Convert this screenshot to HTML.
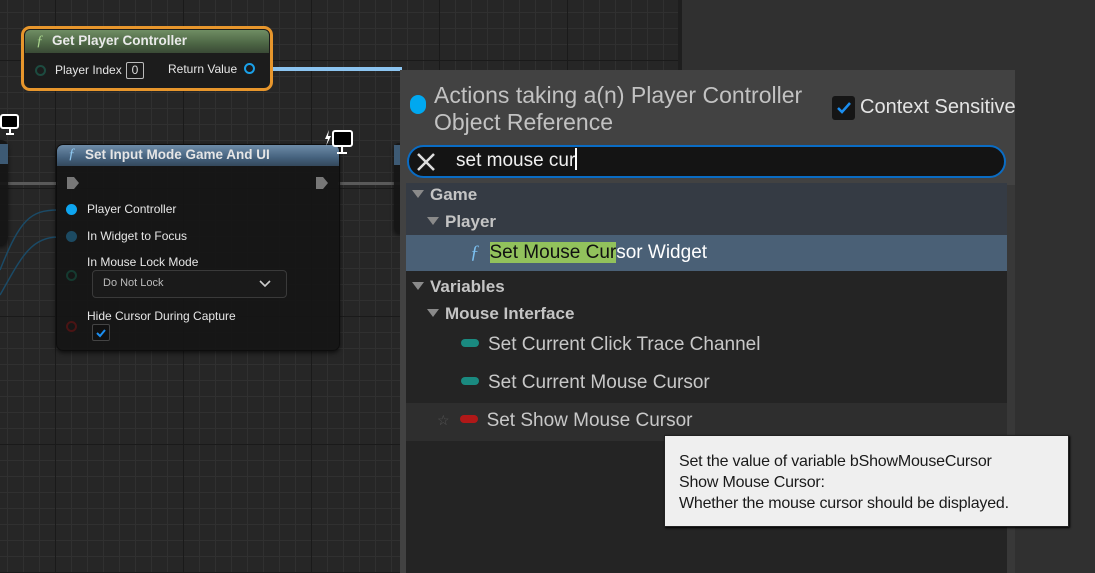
<!DOCTYPE html>
<html><head><meta charset="utf-8"><style>
*{margin:0;padding:0;box-sizing:border-box}
body{width:1095px;height:573px;overflow:hidden;background:#303030;font-family:"Liberation Sans",sans-serif;position:relative}
.abs{position:absolute}
#grid{left:0;top:0;width:678px;height:573px;background-color:#262626;
background-image:linear-gradient(#1a1a1a 1px,transparent 1px),linear-gradient(90deg,#1a1a1a 1px,transparent 1px),linear-gradient(#303030 1px,transparent 1px),linear-gradient(90deg,#303030 1px,transparent 1px);
background-size:128px 128px,128px 128px,16px 16px,16px 16px;background-position:0 60px,55px 0,0 12px,7px 0}
#gedge{left:678px;top:0;width:4px;height:573px;background:#1e1e1e}
.node{border-radius:7px;background:rgba(22,22,22,.93);box-shadow:0 2px 4px rgba(0,0,0,.6)}
.t{color:#e6e6e6;font-size:12px;position:absolute;white-space:nowrap}
.pin{position:absolute;width:11px;height:11px;border-radius:50%}
.pop{left:400px;top:70px;width:615px;height:503px;background:#424242}
.row{position:absolute;left:406px;width:601px;color:#c0c0c0;white-space:nowrap}
.tri{display:inline-block;width:0;height:0;border-left:6px solid transparent;border-right:6px solid transparent;border-top:8px solid #8a8a8a;margin-right:6px;vertical-align:2px}
.cat{font-size:17px;font-weight:bold;color:#c4c4c4}
.item{font-size:19px;color:#c8c8c8}
.pill{display:inline-block;width:18px;height:8px;border-radius:4px;vertical-align:3px;margin-right:9px}
</style></head><body>
<div id="grid" class="abs"></div><div id="gedge" class="abs"></div>

<div class="abs" style="left:262px;top:67px;width:140px;height:4px;background:#8cc4f0"></div>
<div class="abs" style="left:0;top:182px;width:58px;height:3px;background:#5a5a5a"></div>
<div class="abs" style="left:338px;top:182px;width:62px;height:3px;background:#5a5a5a"></div>
<svg class="abs" style="left:0;top:200px" width="70" height="100"><path d="M0 95 C20 60 30 37 58 37" stroke="#1b4a66" stroke-width="1.5" fill="none"/><path d="M0 70 C20 20 30 10 58 10" stroke="#1b4a66" stroke-width="1.5" fill="none"/></svg>

<div class="abs node" style="left:-10px;top:140px;width:18px;height:105px"></div>
<div class="abs" style="left:-10px;top:144px;width:18px;height:20px;background:#3d5a74"></div>
<svg class="abs" style="left:0;top:114px" width="20" height="22"><rect x="1" y="1" width="17" height="13" rx="2" fill="#000" stroke="#fff" stroke-width="2"/><path d="M6 20h8M10 14v6" stroke="#fff" stroke-width="2"/></svg>

<div class="abs node" style="left:394px;top:143px;width:10px;height:90px"></div>
<div class="abs" style="left:394px;top:145px;width:6px;height:20px;background:#3d5a74"></div>

<div class="abs" style="left:21px;top:26px;width:252px;height:65px;border:3px solid #e7962c;border-radius:9px;background:#1c1c1c"></div>
<div class="abs" style="left:25px;top:30px;width:244px;height:23px;border-radius:5px 5px 0 0;background:linear-gradient(180deg,#6f8d63,#4c6544 60%,#3a4a36)"></div>
<div class="t" style="left:36px;top:33px;color:#a9d58c;font-style:italic;font-family:'Liberation Serif',serif;font-size:15px">ƒ</div>
<div class="t" style="left:52px;top:33px;font-weight:bold;font-size:13.5px;color:#eaeaea">Get Player Controller</div>
<div class="pin" style="left:35px;top:65px;border:2px solid #1d4b40;width:11px;height:11px"></div>
<div class="t" style="left:55px;top:63px">Player Index</div>
<div class="abs" style="left:126px;top:62px;width:18px;height:17px;border:1px solid #bbb;border-radius:2px;color:#ddd;font-size:12px;text-align:center;line-height:15px">0</div>
<div class="t" style="left:168px;top:62px">Return Value</div>
<div class="pin" style="left:244px;top:63px;border:2px solid #1aa0e8"></div>

<div class="abs node" style="left:56px;top:144px;width:284px;height:207px;border:1px solid #0d0d0d"></div>
<div class="abs" style="left:57px;top:145px;width:282px;height:21px;border-radius:6px 6px 0 0;background:linear-gradient(180deg,#6e8ca8,#45627e 60%,#34485c)"></div>
<div class="t" style="left:68px;top:146px;color:#8fc8f0;font-style:italic;font-family:'Liberation Serif',serif;font-size:15px">ƒ</div>
<div class="t" style="left:85px;top:147px;font-weight:bold;font-size:13.5px;color:#e6e6e6">Set Input Mode Game And UI</div>
<svg class="abs" style="left:324px;top:129px" width="30" height="27"><path d="M5 1 L1 10 L4 10 L2 17 L7 7 L4 7Z" fill="#fff"/><rect x="9" y="2" width="19" height="15" rx="2" fill="#000" stroke="#fff" stroke-width="2"/><path d="M13 24h10M18 17v7" stroke="#fff" stroke-width="2"/></svg>
<svg class="abs" style="left:66px;top:176px" width="14" height="14"><path d="M1 1h7l5 6-5 6H1z" fill="#777"/></svg>
<svg class="abs" style="left:315px;top:176px" width="14" height="14"><path d="M1 1h7l5 6-5 6H1z" fill="#777"/></svg>
<div class="pin" style="left:66px;top:204px;background:#0ea5f0"></div>
<div class="t" style="left:87px;top:202px">Player Controller</div>
<div class="pin" style="left:66px;top:231px;background:#1c4a62"></div>
<div class="t" style="left:87px;top:229px">In Widget to Focus</div>
<div class="t" style="left:87px;top:255px">In Mouse Lock Mode</div>
<div class="pin" style="left:66px;top:270px;border:2px solid #153a30"></div>
<div class="abs" style="left:92px;top:270px;width:195px;height:28px;border:1px solid #3a3a3a;border-radius:4px;background:#1a1a1a"></div>
<div class="t" style="left:103px;top:277px;font-size:11px;color:#bbb">Do Not Lock</div>
<svg class="abs" style="left:259px;top:279px" width="12" height="10"><path d="M1 2l5 5 5-5" stroke="#ccc" stroke-width="1.6" fill="none"/></svg>
<div class="t" style="left:87px;top:309px">Hide Cursor During Capture</div>
<div class="pin" style="left:66px;top:321px;border:2px solid #4a1414"></div>
<div class="abs" style="left:92px;top:324px;width:18px;height:17px;border:1px solid #444;border-radius:2px;background:#111"></div>
<svg class="abs" style="left:94px;top:326px" width="14" height="13"><path d="M3 7l3 3 5-6" stroke="#1b8ef0" stroke-width="2" fill="none"/></svg>

<div class="abs pop"></div>
<div class="abs" style="left:1007px;top:185px;width:8px;height:388px;background:#383838"></div>
<div class="abs" style="left:410px;top:95px;width:16px;height:19px;border-radius:8px;background:#00a8f0"></div>
<div class="abs" style="left:434px;top:82px;font-size:23px;line-height:27px;color:#c2c2c2">Actions taking a(n) Player Controller<br>Object Reference</div>
<div class="abs" style="left:832px;top:96px;width:23px;height:24px;border-radius:3px;background:#151515"></div>
<svg class="abs" style="left:835px;top:100px" width="18" height="16"><path d="M3 8l4 4 8-9" stroke="#1b8ef0" stroke-width="2.5" fill="none"/></svg>
<div class="abs" style="left:860px;top:96px;font-size:20px;color:#e4e4e4;white-space:nowrap">Context Sensitive</div>

<div class="abs" style="left:407px;top:145px;width:599px;height:33px;border:2px solid #0a6cc4;border-radius:17px;background:#141414"></div>
<svg class="abs" style="left:416px;top:152px" width="20" height="20"><path d="M2 2l16 16M18 2L2 18" stroke="#ddd" stroke-width="2.5"/></svg>
<div class="abs" style="left:456px;top:148px;font-size:19px;color:#f0f0f0;white-space:nowrap">set mouse cur<span style="display:inline-block;width:2px;height:22px;background:#fff;vertical-align:-4px"></span></div>

<div class="abs" style="left:406px;top:183px;width:601px;height:390px;background:#242424"></div>
<div class="row" style="top:183px;height:52px;background:#353b44"></div>
<div class="row cat" style="top:185px;left:412px"><span class="tri"></span>Game</div>
<div class="row cat" style="top:212px;left:427px"><span class="tri"></span>Player</div>
<div class="row" style="top:235px;height:36px;background:#4a6076"></div>
<div class="row item" style="top:242px;left:470px;color:#fff"><span style="color:#7cc0f0;font-style:italic;font-family:'Liberation Serif',serif;margin-right:10px">ƒ</span><span style="background:#92c25c;color:#111">Set Mouse Cur</span>sor Widget</div>
<div class="row cat" style="top:277px;left:412px"><span class="tri"></span>Variables</div>
<div class="row cat" style="top:304px;left:427px"><span class="tri"></span>Mouse Interface</div>
<div class="row item" style="top:334px;left:461px"><span class="pill" style="background:#1a8a80"></span>Set Current Click Trace Channel</div>
<div class="row item" style="top:372px;left:461px"><span class="pill" style="background:#1a8a80"></span>Set Current Mouse Cursor</div>
<div class="row" style="top:403px;height:38px;background:#2e2e2e"></div>
<div class="row item" style="top:410px;left:437px"><span style="color:#555;font-size:14px;margin-right:10px;vertical-align:1px">☆</span><span class="pill" style="background:#b01818"></span>Set Show Mouse Cursor</div>

<div class="abs" style="left:664px;top:435px;width:405px;height:92px;background:#efefef;border:1px solid #222;box-shadow:1px 1px 2px #000;padding:15px 0 0 14px;font-size:16px;line-height:21px;color:#1a1a1a;white-space:nowrap;letter-spacing:-0.2px">Set the value of variable bShowMouseCursor<br>Show Mouse Cursor:<br>Whether the mouse cursor should be displayed.</div>
</body></html>
